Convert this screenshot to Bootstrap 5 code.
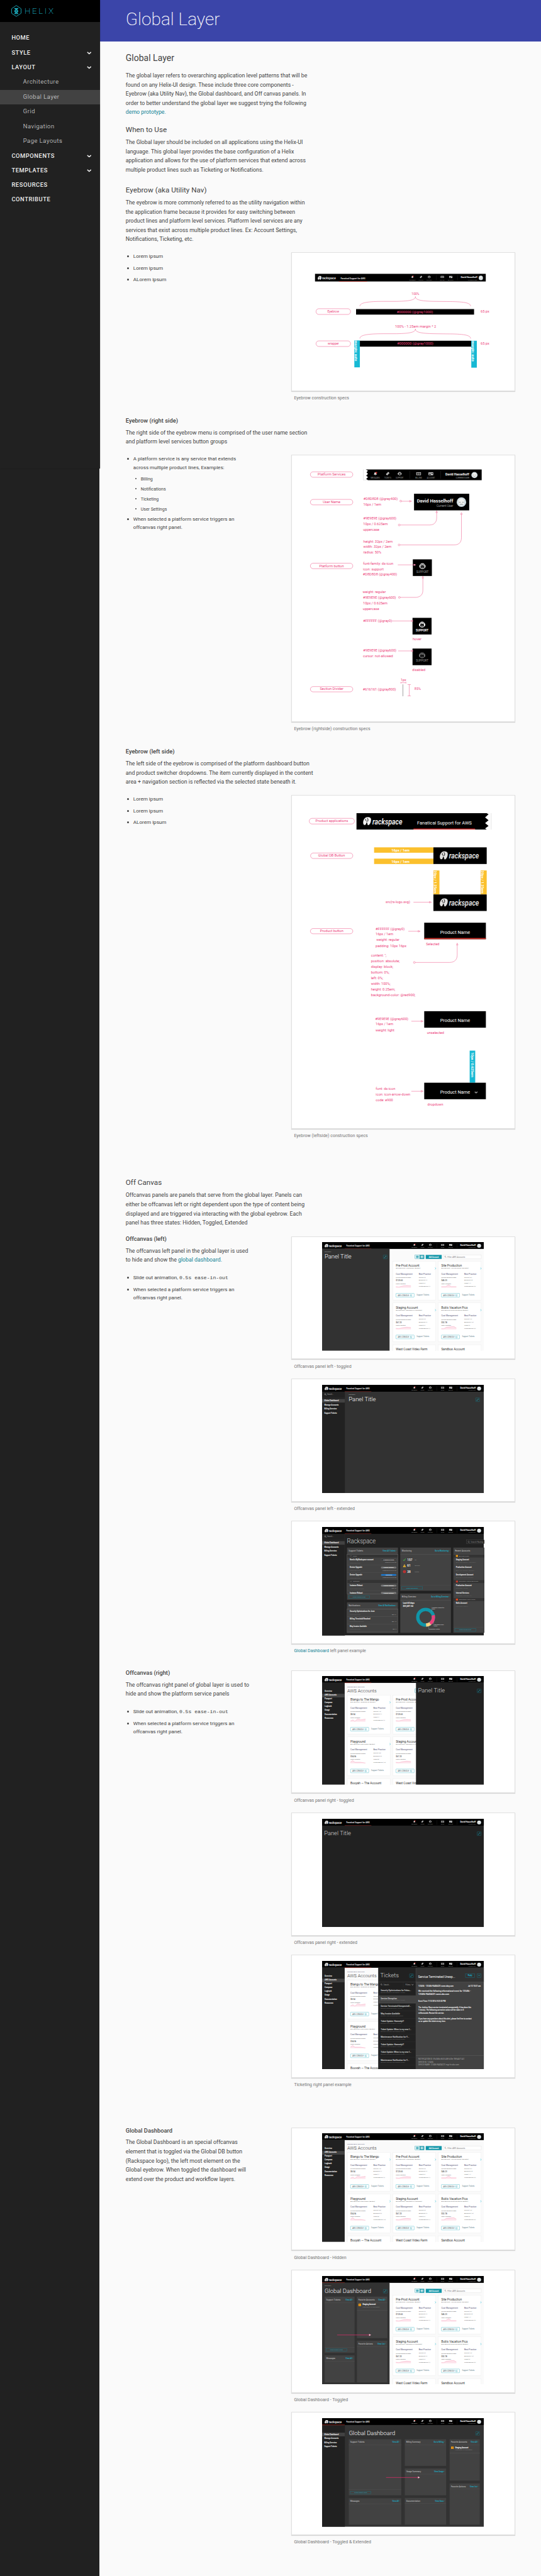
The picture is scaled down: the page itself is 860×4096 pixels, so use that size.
<!DOCTYPE html>
<html lang="en">
<head>
<meta charset="utf-8">
<meta name="viewport" content="width=device-width, initial-scale=1">
<title>Global Layer - Helix</title>
<link href="https://cdn.jsdelivr.net/npm/bootstrap@5.3.0/dist/css/bootstrap.min.css" rel="stylesheet">
<style>
:root{--u:.58424px;font-size:calc(16*var(--u))}
body{font-family:Roboto,"Liberation Sans",sans-serif;font-size:calc(15.05*var(--u));line-height:calc(25*var(--u));color:#424242;background:#fafafa;min-height:100vh}
a{color:#118295;text-decoration:none}
.shell{min-height:4096px;background:#fafafa}
.side{width:calc(270.5*var(--u));background:#212121;flex:none}
.side-top{width:calc(272*var(--u));height:calc(1276*var(--u));background:#212121;box-shadow:0 0 2px rgba(0,0,0,.3)}
.brand{height:calc(60*var(--u));background:#000;padding-left:calc(31.500*var(--u))}
.brand svg{width:calc(118*var(--u));height:calc(32*var(--u))}
.menu{padding-top:calc(24.5*var(--u))}
.menu .nav-link{height:calc(40*var(--u));line-height:calc(39*var(--u));padding:0 calc(23*var(--u)) 0 calc(31.500*var(--u));font-size:calc(16*var(--u));font-weight:500;letter-spacing:calc(1*var(--u));color:#eee}
.menu .nav-link.sub{padding-left:calc(63*var(--u));font-weight:300;letter-spacing:calc(1.05*var(--u));color:#e6e6e6}
.menu .nav-link.active{background:#424242}
.menu svg{width:calc(13*var(--u));height:calc(8*var(--u))}
.hero{height:calc(113*var(--u));background:#3b45a9;padding-left:calc(71.500*var(--u))}
.hero h1{font-size:calc(48*var(--u));line-height:calc(60*var(--u));padding-top:calc(22.5*var(--u));font-weight:200;color:#fff;margin:0}
.doc{padding:0 calc(70.4*var(--u)) calc(76*var(--u)) calc(71.5*var(--u))}
.doc h2{font-size:calc(24*var(--u));line-height:calc(32*var(--u));margin:calc(28.8*var(--u)) 0 calc(19.7*var(--u));font-weight:400}
.doc h3{font-size:calc(20*var(--u));line-height:calc(28*var(--u));margin:calc(28*var(--u)) 0 calc(8*var(--u));font-weight:400}
.doc h4{font-size:calc(16*var(--u));line-height:calc(24*var(--u));margin:calc(40.1*var(--u)) 0 calc(8*var(--u));font-weight:500}
.doc h3.near{margin-top:calc(20.5*var(--u))}
.doc h3.far{margin-top:calc(103.5*var(--u))}
.doc p{max-width:calc(530*var(--u));margin:0}
.doc .half h4{margin-top:0}
.doc .half p{max-width:calc(360*var(--u))}
.doc ul{list-style:none;padding-left:calc(20.5*var(--u));margin:0;font-size:calc(13.9*var(--u));line-height:calc(23*var(--u))}
.doc .half ul{margin-top:calc(24.6*var(--u))}
.doc li{margin-bottom:calc(8.7*var(--u));position:relative}
.doc li::before{content:"";position:absolute;left:calc(-17.5*var(--u));top:calc(8.5*var(--u));width:calc(5.2*var(--u));height:calc(5.2*var(--u));border-radius:50%;background:#424242}
.doc li ul{font-size:calc(12*var(--u));line-height:calc(20*var(--u));padding-top:calc(9.6*var(--u));margin-bottom:calc(-2.3*var(--u))}
.doc li li{margin-bottom:calc(7.3*var(--u))}
.doc li li::before{left:calc(-15.5*var(--u));top:calc(7.3*var(--u));width:calc(4*var(--u));height:calc(4*var(--u))}
code{font-family:"Liberation Mono",monospace;font-size:calc(13.9*var(--u));color:#424242}
.pics{width:calc(609*var(--u));flex:none}
.pics .figure{margin:0 0 calc(23.2*var(--u));display:block}
.pics .figure:last-child{margin-bottom:0}
.pics .card{border:1px solid #e0e0e0;border-radius:0;box-shadow:0 1px 1px rgba(0,0,0,.14);background:#fff;overflow:hidden}
.spec svg{width:calc(609*var(--u));flex:none;display:block;margin:-1px}
.shot .card{height:calc(335*var(--u));align-items:center;padding-top:calc(15*var(--u))}
.shot svg{width:calc(440*var(--u));height:calc(295.5*var(--u));flex:none}
.figure-caption{font-size:calc(12*var(--u));line-height:calc(20*var(--u));padding:calc(9*var(--u)) 0 0 calc(7.500*var(--u));color:#757575}
.gap-a{margin-top:calc(23*var(--u))}
.gap-b{margin-top:calc(19.5*var(--u))}
.gap-c{margin-top:calc(38.1*var(--u))}
.gap-d{margin-top:calc(102.6*var(--u))}
.half .pics{padding-top:calc(4.5*var(--u))}
.gap-d .pics{padding-top:calc(3.5*var(--u))}
svg text{font-family:Roboto,"Liberation Sans",sans-serif;white-space:pre}
</style>
</head>
<body>
<div class="shell d-flex">
  <aside class="side">
    <div class="side-top position-relative">
      <div class="brand d-flex align-items-center">
        <svg viewBox="0 0 118 32"><g fill="none" stroke="#1fbdd0" stroke-width="1.4"><path d="M13.5 1.2 26.5 10v12.500L13.5 31 .8 22.500V10z"/><path stroke-width="2" d="M9 8c0 5 9 4.500 9 8.500s-9 3.500-9 8M18 8c0 5-9 4.500-9 8.500s9 3.500 9 8M10 9.500h7M10 23.500h7M10.500 16.500h6"/></g><text x="36" y="24" font-size="23" font-weight="200" fill="#1fbdd0" letter-spacing="5" textLength="84">HELIX</text></svg>
      </div>
      <nav class="menu nav flex-column">
        <a class="nav-link" href="#">HOME</a>
        <a class="nav-link d-flex justify-content-between align-items-center" href="#">STYLE <svg viewBox="0 0 13 8"><path d="M1.500 1.500l5 4.500 5-4.500" fill="none" stroke="#eee" stroke-width="2.600"/></svg></a>
        <a class="nav-link d-flex justify-content-between align-items-center" href="#">LAYOUT <svg viewBox="0 0 13 8"><path d="M1.500 1.500l5 4.500 5-4.500" fill="none" stroke="#eee" stroke-width="2.600"/></svg></a>
        <a class="nav-link sub" href="#">Architecture</a>
        <a class="nav-link sub active" href="#">Global Layer</a>
        <a class="nav-link sub" href="#">Grid</a>
        <a class="nav-link sub" href="#">Navigation</a>
        <a class="nav-link sub" href="#">Page Layouts</a>
        <a class="nav-link d-flex justify-content-between align-items-center" href="#">COMPONENTS <svg viewBox="0 0 13 8"><path d="M1.500 1.500l5 4.500 5-4.500" fill="none" stroke="#eee" stroke-width="2.600"/></svg></a>
        <a class="nav-link d-flex justify-content-between align-items-center" href="#">TEMPLATES <svg viewBox="0 0 13 8"><path d="M1.500 1.500l5 4.500 5-4.500" fill="none" stroke="#eee" stroke-width="2.600"/></svg></a>
        <a class="nav-link" href="#">RESOURCES</a>
        <a class="nav-link" href="#">CONTRIBUTE</a>
      </nav>
    </div>
  </aside>
  <main class="flex-grow-1">
    <header class="hero"><h1>Global Layer</h1></header>
    <div class="doc">
      <h2>Global Layer</h2>
      <p>The global layer refers to overarching application level patterns that will be<br>found on any Helix-UI design. These include three core components -<br>Eyebrow (aka Utility Nav), the Global dashboard, and Off canvas panels. In<br>order to better understand the global layer we suggest trying the following<br><a href="#">demo prototype.</a></p>
      <h3 class="near">When to Use</h3>
      <p>The Global layer should be included on all applications using the Helix-UI<br>language. This global layer provides the base configuration of a Helix<br>application and allows for the use of platform services that extend across<br>multiple product lines such as Ticketing or Notifications.</p>
      <h3>Eyebrow (aka Utility Nav)</h3>
      <p>The eyebrow is more commonly referred to as the utility navigation within<br>the application frame because it provides for easy switching between<br>product lines and platform level services. Platform level services are any<br>services that exist across multiple product lines. Ex: Account Settings,<br>Notifications, Ticketing, etc.</p>
      <div class="d-flex justify-content-between gap-a">
        <ul><li>Lorem ipsum</li><li>Lorem ipsum</li><li>ALorem ipsum</li></ul>
        <div class="pics spec"><figure class="figure"><div class="card"><svg id="spec1" viewBox="0 0 609 377"></svg></div><figcaption class="figure-caption">Eyebrow construction specs</figcaption></figure></div>
      </div>
      <h4>Eyebrow (right side)</h4>
      <p>The right side of the eyebrow menu is comprised of the user name section<br>and platform level services button groups</p>
      <div class="d-flex justify-content-between gap-a">
        <ul><li>A platform service is any service that extends<br>across multiple product lines, Examples:
          <ul><li>Billing</li><li>Notifications</li><li>Ticketing</li><li>User Settings</li></ul></li>
          <li>When selected a platform service triggers an<br>offcanvas right panel.</li></ul>
        <div class="pics spec"><figure class="figure"><div class="card"><svg id="spec2" viewBox="0 0 609 727"></svg></div><figcaption class="figure-caption">Eyebrow (rightside) construction specs</figcaption></figure></div>
      </div>
      <h4>Eyebrow (left side)</h4>
      <p>The left side of the eyebrow is comprised of the platform dashboard button<br>and product switcher dropdowns. The item currently displayed in the content<br>area + navigation section is reflected via the selected state beneath it.</p>
      <div class="d-flex justify-content-between gap-a">
        <ul><li>Lorem ipsum</li><li>Lorem ipsum</li><li>ALorem ipsum</li></ul>
        <div class="pics spec"><figure class="figure"><div class="card"><svg id="spec3" viewBox="0 0 609 908"></svg></div><figcaption class="figure-caption">Eyebrow (leftside) construction specs</figcaption></figure></div>
      </div>
      <h3 class="far">Off Canvas</h3>
      <p>Offcanvas panels are panels that serve from the global layer. Panels can<br>either be offcanvas left or right dependent upon the type of content being<br>displayed and are triggered via interacting with the global eyebrow. Each<br>panel has three states: Hidden, Toggled, Extended</p>
      <div class="d-flex justify-content-between half gap-b">
        <div><h4>Offcanvas (left)</h4><p>The offcanvas left panel in the global layer is used<br>to hide and show the <a href="#">global dashboard.</a></p>
          <ul><li>Slide out animation, <code>0.5s ease-in-out</code></li><li>When selected a platform service triggers an<br>offcanvas right panel.</li></ul></div>
        <div class="pics shot">
          <figure class="figure"><div class="card"><svg id="shot1" viewBox="0 0 440 295.5"></svg></div><figcaption class="figure-caption">Offcanvas panel left - toggled</figcaption></figure>
          <figure class="figure"><div class="card"><svg id="shot2" viewBox="0 0 440 295.5"></svg></div><figcaption class="figure-caption">Offcanvas panel left - extended</figcaption></figure>
          <figure class="figure"><div class="card"><svg id="shot3" viewBox="0 0 440 295.5"></svg></div><figcaption class="figure-caption"><a href="#">Global Dashboard</a> left panel example</figcaption></figure>
        </div>
      </div>
      <div class="d-flex justify-content-between half gap-c">
        <div><h4>Offcanvas (right)</h4><p>The offcanvas right panel of global layer is used to<br>hide and show the platform service panels</p>
          <ul><li>Slide out animation, <code>0.5s ease-in-out</code></li><li>When selected a platform service triggers an<br>offcanvas right panel.</li></ul></div>
        <div class="pics shot">
          <figure class="figure"><div class="card"><svg id="shot4" viewBox="0 0 440 295.5"></svg></div><figcaption class="figure-caption">Offcanvas panel right - toggled</figcaption></figure>
          <figure class="figure"><div class="card"><svg id="shot5" viewBox="0 0 440 295.5"></svg></div><figcaption class="figure-caption">Offcanvas panel right - extended</figcaption></figure>
          <figure class="figure"><div class="card"><svg id="shot6" viewBox="0 0 440 295.5"></svg></div><figcaption class="figure-caption">Ticketing right panel example</figcaption></figure>
        </div>
      </div>
      <div class="d-flex justify-content-between half gap-d">
        <div><h4>Global Dashboard</h4><p>The Global Dashboard is an special offcanvas<br>element that is toggled via the Global DB button<br>(Rackspace logo), the left most element on the<br>Global eyebrow. When toggled the dashboard will<br>extend over the product and workflow layers.</p></div>
        <div class="pics shot">
          <figure class="figure"><div class="card"><svg id="shot7" viewBox="0 0 440 295.5"></svg></div><figcaption class="figure-caption">Global Dashboard - Hidden</figcaption></figure>
          <figure class="figure"><div class="card"><svg id="shot8" viewBox="0 0 440 295.5"></svg></div><figcaption class="figure-caption">Global Dashboard - Toggled</figcaption></figure>
          <figure class="figure"><div class="card"><svg id="shot9" viewBox="0 0 440 295.5"></svg></div><figcaption class="figure-caption">Global Dashboard - Toggled &amp; Extended</figcaption></figure>
        </div>
      </div>
    </div>
  </main>
</div>
<script src="https://cdn.jsdelivr.net/npm/bootstrap@5.3.0/dist/js/bootstrap.bundle.min.js"></script>
<script>
const PINK = '#ec407a', CYAN = '#16b9d4', TEAL = '#1095a8', GOLD = '#fbc02d';

// A drawing surface with its own grid: (x / ux + ox, y / uy + oy) gives SVG units.
class Draft {
  constructor(ux = 1, uy = 1, ox = 0, oy = 0) { Object.assign(this, {ux, uy, ox, oy, out: ''}); }
  x(v) { return +(v / this.ux + this.ox).toFixed(2); }
  y(v) { return +(v / this.uy + this.oy).toFixed(2); }
  raw(s) { this.out += s; return this; }
  rect(x1, y1, x2, y2, fill, more = '') {
    return this.raw(`<rect x="${this.x(x1)}" y="${this.y(y1)}" width="${((x2 - x1) / this.ux).toFixed(2)}" height="${((y2 - y1) / this.uy).toFixed(2)}" fill="${fill}" ${more}/>`);
  }
  path(d, more = `fill="none" stroke="${PINK}" stroke-width=".8"`) {
    return this.raw(`<path d="${d.replace(/(-?[\d.]+),(-?[\d.]+)/g, (m, a, b) => this.x(a) + ' ' + this.y(b))}" ${more}/>`);
  }
  text(x, y, s, size, fill = PINK, x2 = 0, more = '') {
    if (!s) return this;
    const fit = x2 ? `textLength="${((x2 - x) / this.ux).toFixed(2)}" lengthAdjust="spacingAndGlyphs"` : '';
    return this.raw(`<text x="${this.x(x)}" y="${this.y(y)}" font-size="${size}" fill="${fill}" ${fit} ${more}>${s}</text>`);
  }
  mid(x, y, s, size, fill = PINK, more = '') { return this.text(x, y, s, size, fill, 0, 'text-anchor="middle" ' + more); }
  down(x, y, s, size, len, fill = '#fff') {
    return this.raw(`<text transform="translate(${this.x(x)} ${this.y(y)}) rotate(90)" font-size="${size}" font-weight="700" fill="${fill}" textLength="${len}" lengthAdjust="spacingAndGlyphs">${s}</text>`);
  }
  pill(x1, y1, x2, y2, s, base, ends) {
    this.rect(x1, y1, x2, y2, 'none', `rx="7.500" stroke="${PINK}" stroke-width=".8"`);
    return ends ? this.text(ends[0], base, s, 8.5, PINK, ends[1]) : this.mid((x1 + x2) / 2, base, s, 8.5);
  }
  dot(x, y) { return this.raw(`<circle cx="${this.x(x)}" cy="${this.y(y)}" r="2.400" fill="#fff" stroke="${PINK}" stroke-width=".8"/>`); }
  arrow(x1, x2, y) {
    this.path(`M${x1},${y} L${x2},${y}`);
    const a = this.x(x2), b = this.y(y);
    return this.raw(`<path d="M${a - 5} ${b - 2.2}L${a} ${b}L${a - 5} ${b + 2.2}z" fill="#fff" stroke="${PINK}" stroke-width=".8"/>`);
  }
  up(x, y) {
    const a = this.x(x), b = this.y(y);
    return this.raw(`<path d="M${a - 2.2} ${b + 5}L${a} ${b}L${a + 2.2} ${b + 5}z" fill="#fff" stroke="${PINK}" stroke-width=".8"/>`);
  }
  put(id) { document.getElementById(id).innerHTML += this.out; }
}

// Icons are drawn on a 16 x 16 grid around their centre.
const ICONS = {
  bell: c => `<path fill="${c}" d="M0-7c-4 0-5 3-5 6s-1 4-3 6H8C6 3 5 2 5-1S4-7 0-7zM-2.500 6h5L0 8z"/><circle cx="5" cy="-4.500" r="4" fill="#e53935"/>`,
  ticket: c => `<g transform="rotate(-45)"><rect x="-8" y="-4.500" width="16" height="9" rx="1" fill="${c}"/><rect x="-4" y="-2" width="8" height="4" fill="none" stroke="#000" stroke-width="1.200"/></g>`,
  support: c => `<circle r="6.500" fill="none" stroke="${c}" stroke-width="2"/><path fill="${c}" d="M-5-1C-4-6 4-6 5-1 2-1 0-2-1-3-2-1-3-1-5-1zM-8-2.500h3v6h-3zM5-2.500h3v6H5z"/><circle cx="-2" cy="1.500" r=".9" fill="${c}"/><circle cx="2" cy="1.500" r=".9" fill="${c}"/><path d="M-2 4.500h4" stroke="${c}"/>`,
  billing: c => `<path fill="${c}" fill-rule="evenodd" d="M-9-5.500H9v11H-9zM-7-3.500v7H7v-7z"/><ellipse rx="2.600" ry="3" fill="none" stroke="${c}" stroke-width="1.600"/><path stroke="${c}" stroke-width="1.500" d="M-6.500-3v1.500M6.500-3v1.500M-6.500 3V1.500M6.500 3V1.500"/>`,
  account: c => `<path fill="${c}" d="M-9-5.500H9v11H-9z"/><circle cx="-3.500" cy="-1.500" r="2" fill="#000"/><path fill="#000" d="M-7 4c0-4 7-4 7 0zM2-3h5v1.500H2zM2 0h5v1.500H2z"/>`
};
const icon = (name, x, y, k, c = '#e0e0e0') => `<g transform="translate(${x} ${y}) scale(${k})">${ICONS[name](c)}</g>`;

const avatar = (x, y, r) => `<circle cx="${x}" cy="${y}" r="${r}" fill="#cfdbe1"/><ellipse cx="${x}" cy="${y}" rx="${r * .62}" ry="${r * .72}" fill="#f1f1ee"/><path d="M${x - r * .5} ${y}h${r * .35}M${x + r * .15} ${y}h${r * .35}M${x - r * .3} ${y + r * .45}h${r * .6}" stroke="#8f989d" stroke-width="${r * .14}"/>`;

// Rackspace mark and wordmark; 46 x 10 at scale 1.
const logo = (x, y, k, c = '#f2f2f2') => `<g transform="translate(${x} ${y}) scale(${k})"><path fill="${c}" d="M4.500.3C7 0 9.600.5 9.500 3.600 9.400 6.200 8.200 9.200 6.200 9.800 5.200 10 5.400 7.800 4.400 6 3.600 7.500 3.600 9.300 2.200 9.600.6 9.800-.2 7.600.2 5.400.7 2.900 2.600.6 4.500.3z"/><path d="M4.800 1.200c1.200 1 1.400 2.600.6 4.200M3.400 2.400c-.9 1.400-.3 2.500 1.300 2.800" fill="none" stroke="#000" stroke-width=".7"/><text x="11" y="8.700" font-size="9" font-weight="600" font-style="italic" fill="${c}" textLength="35.500" lengthAdjust="spacingAndGlyphs">rackspace</text></g>`;

const tools = caps => {
  const d = new Draft(), L = '#9e9e9e';
  const up = s => caps ? s.toUpperCase() : s;
  d.raw(icon('bell', 251, 7.5, .36)).mid(251, 15.8, 'MESSAGES', 3.2, L);
  d.raw(icon('ticket', 273, 7.5, .36)).mid(273, 15.8, up('Tickets'), 3.2, L);
  d.raw(icon('support', 294.3, 7.5, .4)).mid(294.3, 15.8, 'SUPPORT', 3.2, L);
  d.rect(312, 3, 312.4, 16.5, '#424242');
  d.raw(icon('billing', 328, 7.7, .46)).mid(328, 15.8, up('Billing'), 3.2, L);
  d.raw(icon('account', 349.8, 7.7, .46)).mid(349.8, 15.8, up('Account'), 3.2, L);
  d.rect(367, 3, 367.4, 16.5, '#424242');
  d.text(375.7, 10.6, 'David Hasselhoff', 5.8, '#fff', 418, 'font-weight="700"');
  d.text(caps ? 394 : 398.5, 15.9, caps ? 'CURRENTUSER' : 'Current User', 3.2, L, 418);
  return d.out + avatar(427.3, 10, 5.5);
};
const topbar = (red, caps) => new Draft()
  .rect(0, 0, 440, 18.6, '#000').raw(logo(7, 4.8, 1))
  .text(66, 12.8, 'Fanatical Support for AWS', 6.2, '#fff', 129.5, 'font-weight="500"')
  .raw(red ? `<rect x="${red[0]}" y="17.900" width="${red[1]}" height="1.100" fill="${red[2]}"/>` : '')
  .raw(tools(caps)).out;
const AWS = ['61.500', '72.500', '#c1352b'], DIM = ['61.500', '72.500', '#8a2c27'], HOME = ['0', '61.500', '#c1352b'];

/* ---------- Eyebrow construction ---------- */
{
  const d = new Draft(1.0652, 2.3059, -792.5, -27);
  d.raw(`<g transform="translate(${d.x(913)} ${d.y(198)}) scale(1.056 1.120)">${topbar(AWS, true)}</g>`);
  const brace = y => d.path(`M1043,${y + 60} C1043,${y + 38} 1066,${y + 30} 1112,${y + 30} L1150,${y + 30} C1190,${y + 28} 1204,${y + 20} 1204,${y} C1204,${y + 20} 1218,${y + 28} 1258,${y + 30} L1296,${y + 31} C1342,${y + 31} 1364,${y + 38} 1364,${y + 60}`);
  d.mid(1204, 331, '100%', 8.5); brace(341);
  d.pill(916, 417, 1016, 453, 'Eyebrow', 442);
  d.rect(1032, 417, 1374, 421, '#bdbdbd').rect(1032, 420, 1374, 454, '#000');
  d.text(1150, 445, '#000000 (@gray1000)', 8.5, PINK, 1255).text(1393, 442, '65 px', 8.5, PINK, 1418);
  d.text(1145, 535, '100% - 1.25em margin * 2', 8.5, PINK, 1264); brace(544);
  d.pill(916, 619, 1016, 654, 'wrapper', 643);
  d.rect(1043, 618, 1366, 655, '#000').text(1151, 643, '#000000 (@gray1000)', 8.5, PINK, 1256).text(1393, 643, '65 px', 8.5, PINK, 1418);
  d.rect(1027, 616, 1043, 785, CYAN).rect(1366, 618, 1382, 787, CYAN);
  d.down(1028.5, 617, 'margin: auto', 9, 56).down(1368, 619, 'margin: auto', 9, 56);
  d.put('spec1');
}

/* ---------- Eyebrow, right side ---------- */
{
  const d = new Draft(2.45, 2.0103, -12.5, -38);
  const T = (x, y, s, x2) => d.text(x, y, s, 9, PINK, x2);
  d.pill(158, 170, 441, 200, 'Platform Services', 191, [207, 393]);
  d.path('M511,157 L511,215 L1300,215', 'fill="none" stroke="#bdbdbd" stroke-width=".6"');
  d.path('M527,157 L542,164 L532,173 L542,181 L530,191 L542,199 L530,209 L542,216 L1300,216 L1300,157z', 'fill="#000"');
  d.raw(`<g transform="translate(-155.300 ${d.y(157)}) scale(1.530)">${tools(true)}</g>`);

  d.pill(158, 321, 441, 351, 'User Name', 342, [241, 358]);
  T(512, 324, '#D8D8D8 (@gray400)', 740); T(511, 354, '16px / 1em', 630);
  d.arrow(760, 832, 331).dot(760, 330);
  d.rect(849, 290, 1217, 381, '#000').text(868, 339, 'David Hasselhoff', 13, '#f2f2f2', 1110, 'font-weight="700"').text(999, 362, 'Current User', 8, '#9e9e9e', 1110);
  d.raw(avatar(d.x(1165), d.y(336), 13));
  T(511, 430, '#9E9E9E (@gray600)', 731); T(510, 462, '10px / 0.625em', 674); T(510, 494, 'uppercase', 618);
  d.path('M750,461 L952,461 C985,461 1000,445 1000,420 L1000,392').dot(750, 461).up(1000, 383);
  T(511, 557, 'height: 32px / 2em', 706); T(511, 587, 'width: 32px / 2em', 698); T(511, 618, 'radius: 50%', 631);
  d.path('M749,570 L1115,570 C1150,570 1165,555 1165,530 L1165,402').dot(749, 570).up(1165, 393);

  d.pill(158, 670, 441, 700, 'Platform button', 691, [217, 381]);
  T(510, 677, 'font-family: ds-icon', 710); T(509, 708, 'icon: support', 646); T(508, 738, '#D8D8D8 (@gray400)', 736);
  const chip = (x, y, c, l, w) => d.rect(x, y, x + 127, y + 91, '#000').raw(icon('support', d.x(x + 64), d.y(y + 37), 1.05, c)).mid(x + 64, y + 73, 'SUPPORT', 7.7, l, `font-weight="${w}"`);
  chip(841, 649, '#e0e0e0', '#9e9e9e', 400);
  d.arrow(741, 860, 679);
  T(507, 834, 'weight: regular', 661); T(509, 866, '#9E9E9E (@gray600)', 729); T(509, 897, '10px / 0.625em', 672); T(508, 927, 'uppercase', 616);
  d.path('M751,857 L862,857 C894,855 908,840 908,818 L908,750').dot(751, 857).up(908, 741);
  T(510, 991, '#FFFFFF (@gray0)', 702); chip(839, 969, '#fff', '#fff', 700); d.arrow(702, 844, 986); T(840, 1092, 'hover', 898);
  T(510, 1154, '#9E9E9E (@gray600)', 731); T(509, 1184, 'cursor: not-allowed', 709); chip(839, 1137, '#757575', '#9e9e9e', 400); d.arrow(743, 844, 1150); T(837, 1260, 'disabled', 924);

  d.pill(158, 1345, 441, 1374, 'Section Divider', 1365, [221, 378]);
  T(508, 1367, '#616161 (@gray800)', 729); T(760, 1315, '1px', 797); T(852, 1363, '85%', 894);
  d.path('M761,1320 L761,1328 M761,1324 L795,1324 M795,1320 L795,1328 M806,1334 L828,1334 M817,1334 L817,1396 M806,1396 L828,1396');
  d.path('M775,1333 L775,1398', 'stroke="#616161"');
  d.put('spec2');
}

/* ---------- Eyebrow, left side ---------- */
{
  const d = new Draft(1.4, 2.8, -492.5, -184.5);
  d.pill(758, 695, 930, 738, 'Product applications', 725, [782, 906]);
  d.path('M938,655 L1434,655 L1441,664 L1428,688 L1441,710 L1428,731 L1441,753 L1428,772 L1434,780 L938,780z', 'fill="#000"');
  d.path('M1451,655 L1451,780', 'stroke="#bdbdbd" stroke-width=".7"');
  d.raw(logo(d.x(963), d.y(684), 2.3)).text(1169, 741, 'Fanatical Support for AWS', 12.5, '#fff', 1377);
  d.rect(1155, 773, 1390, 780, '#d32f2f');
  d.pill(763, 959, 924, 1001, 'Global DB Button', 988, [792, 894]);
  for (const y of [916, 1002]) d.rect(1005, y, 1231, y + 41, GOLD).text(1071, y + 32, '16px / 1em', 8.5, '#fff', 1140, 'font-weight="700"');
  d.rect(1231, 916, 1434, 1043, '#000').raw(logo(d.x(1255), d.y(945), 2.3, '#e0e0e0'));
  for (const x of [1231, 1411]) d.rect(x, 1092, x + 23, 1275, GOLD).down(x + 2, 1094, '20px / 1.25em', 9.5, 62);
  d.rect(1231, 1275, 1434, 1401, '#000').raw(logo(d.x(1255), d.y(1303), 2.3, '#e0e0e0'));
  d.text(1049, 1341, 'src(rs-logo.svg)', 8.5, PINK, 1142).arrow(1155, 1223, 1334);
  d.put('spec3');

  const e = new Draft(2.45, 2.45, -12.5, 335.5);
  const T = (x, y, s, x2) => e.text(x, y, s, 9.6, PINK, x2);
  const name = y => e.rect(917, y, 1328, y + 110, '#000').text(1023, y + 74, 'Product Name', 13.5, '#fff', 1223);
  e.pill(158, 69, 441, 104, 'Product button', 93, [222, 378]);
  T(593, 78, '#FFFFFF (@gray0)', 786); T(593, 115, '16px / 1em', 710); T(598, 152, 'weight: regular', 752); T(593, 191, 'padding: 10px 16px', 798);
  e.arrow(811, 889, 87); name(30); e.rect(917, 132, 1328, 140, '#c62f26');
  T(929, 179, 'Selected', 1018);
  [["content: '';", 257, 665], ['position: absolute;', 294, 754], ['display: block;', 333, 710], ['bottom: 0%;', 370, 685], ['left: 0%;', 407, 643], ['width: 100%;', 443, 692], ['height: 0.25em;', 482, 723], ['background-color: @red900;', 519, 858]].forEach(r => T(562, r[1], r[0], r[2]));
  e.path('M851,295 L1085,295 C1120,295 1137,275 1137,245 L1137,177').dot(851, 295).up(1137, 166);
  T(590, 678, '#9E9E9E (@gray600)', 811); T(593, 715, '16px / 1em', 710); T(593, 754, 'weight: light', 718);
  e.arrow(831, 909, 687); name(620); T(935, 771, 'unselected', 1049);
  e.rect(1220, 883, 1257, 1097, CYAN).down(1230, 894, '10px / 0.625em', 9.5, 68);
  name(1097); e.path('M1254,1157 L1263,1165 L1272,1157', 'fill="none" stroke="#9e9e9e" stroke-width="2.200"');
  T(594, 1146, 'font: ds-icon', 724); T(594, 1183, 'icon: icon-arrow-down', 824); T(594, 1220, 'code: e900', 709);
  e.arrow(831, 909, 1154); T(939, 1249, 'dropdown', 1044);
  e.put('spec3');
}

/* ---------- Product screens ---------- */
const ACCOUNTS = [
  [['Blango to The Mango', '45656256452 (Aviator)', '$8.34', [12, 1, 1, 4], 78, 'M0 6L7 3L12 7L20 0L28 3L41 1'], ['Pre-Prod Account', '3453656657 (Aviator)', '$123.65', [3, 4, 34, 1], 64, 'M0 5L8 6L20 3L30 2L41 3'], ['Site Production', '1233456236656 (Navigator)', '$45.23', [34, 5, 11, 2], 56, 'M0 5L12 5L20 0L27 5L41 5']],
  [['Playground', '6354678654 (Aviator)', '$34.56', [23, 3, 8, 12], 41, 'M0 5L6 0L12 5L28 5L41 7'], ['Staging Account', '76854865743 (Navigator)', '$67.23', [3, 4, 34, 1], 60, 'M0 5L8 6L20 3L30 2L41 3'], ["Bob's Vacation Pics", '87654353456678 (Aviator)', '$32.78', [12, 13, 6, 9], 72, 'M0 6L7 6L14 2L34 0L41 4']],
  [['Booyah — The Account', '', '', [], 84], ['West Coast Video Farm', '', '', [], 86], ['Sandbox Account', '', '', [], 64]]
];
const account = (c, r, a) => {
  const X = 68.6 + c * 123.6, Y = 52.2 + r * 113.5, d = new Draft(1, 1, X, Y);
  d.rect(0, 0, 117, 105.5, '#fff', 'stroke="#ececec" stroke-width=".8"');
  d.text(8.5, 15, a[0], 8.8, '#303030', 8.5 + a[4]);
  if (!a[1]) return d.out;
  d.text(8.5, 20.3, 'AWS Account: ' + a[1], 3.7, '#616161', 8.5 + 36 + a[1].length * 1.55);
  d.path('M115,17 L117.5,19.5 L115,22', `fill="none" stroke="${CYAN}" stroke-width=".9"`);
  d.text(8.5, 36.3, 'Cost Management', 5.4, '#557', 54).text(71, 36.3, 'Best Practice', 5.4, '#557', 104);
  d.text(8.5, 46, 'Current Month-to-Date', 3.4, '#555', 49.5).text(8.5, 54.3, a[2], 5.2, '#212121').text(8.5, 62.3, 'Last 6 months', 3.6, '#555', 35);
  ['Security', 'Availability', 'Usage', 'Trusted Advisor'].forEach((s, i) => d.text(71, [45, 53, 61.2, 70][i], `${s} (${a[3][i]})`, 3.7, '#616161'));
  d.raw(`<g transform="translate(${X + 8.5} ${Y + 64})"><path d="${a[5]}V8H0z" fill="#fde4ec"/><path d="${a[5]}" fill="none" stroke="#f48fb1" stroke-width=".7"/></g>`);
  d.rect(8.8, 87.3, 58.3, 97.5, '#fff', `stroke="#4fb9c9" stroke-width=".8" rx="1"`).text(13.5, 94.2, 'AWS CONSOLE', 4.4, '#35525a', 44.5);
  d.path('M50,90.5 L48,90.500 L48,94.500 L52,94.500 L52,92.500 M50,92.500 L53,89.500', `fill="none" stroke="${TEAL}" stroke-width=".7"`);
  return d.text(65, 93, 'Support Tickets', 4.6, '#607d8b', 99).out;
};
const accounts = from => {
  const d = new Draft();
  d.rect(0, 18.6, 440, 295.5, '#fafafa');
  if (!from) d.text(68.6, 30.5, 'Managed AWS: Accounts', 4, '#557', 115.5).text(68.6, 45, 'AWS Accounts', 12.6, '#303030', 148.2, 'font-weight="300"');
  d.rect(253, 35.2, 265.5, 45.4, '#fff', `stroke="${TEAL}" stroke-width=".7"`).rect(265.5, 34.9, 278, 45.8, TEAL);
  for (let i = 0; i < 9; i++) { const x = i % 3 * 2.6, y = (i / 3 | 0) * 2.3; d.rect(255.5 + x, 37 + y, 257.7 + x, 38.8 + y, TEAL).rect(268 + x, 37 + y, 270.2 + x, 38.8 + y, '#fff'); }
  return d.out + ACCOUNTS.map((row, r) => row.map((a, c) => c >= from ? account(c, r, a) : '').join('')).join('');
};
const filters = () => new Draft()
  .rect(282, 34.9, 325.5, 45.8, TEAL).mid(303.8, 42.3, 'Add Account', 4.8, '#fff', 'font-weight="700"')
  .rect(329.5, 35, 433, 45.6, '#fff', 'stroke="#ddd" stroke-width=".7"').raw('<circle cx="335" cy="39.500" r="1.800" fill="none" stroke="#757575" stroke-width=".7"/><path d="M336.300 40.800l1.800 2" stroke="#757575" stroke-width=".8"/>').text(341, 42.2, 'Filter AWS Accounts', 5, '#757575', 389, 'font-style="italic"').out;
const NAV = ['Overview', 'AWS Accounts', 'Passport', 'Compass', 'Logbook', 'Usage', 'Documentation', 'Resources'];
const productNav = () => {
  const d = new Draft();
  d.rect(0, 18.6, 61.5, 295.5, '#212121').rect(0, 48.3, 61.5, 58.2, '#424242');
  NAV.forEach((s, i) => d.text(7, 43.2 + i * 10.35, s, 4.9, '#eee', 0, 'font-weight="700"'));
  return d.out;
};
const globalNav = (y0, step, search) => {
  const d = new Draft();
  d.rect(0, 18.6, 62, 295.5, '#212121').rect(0, y0 - 6.5, 62, y0 + 3.3, '#424242');
  if (search) d.raw('<circle cx="8.500" cy="25.500" r="1.800" fill="none" stroke="#bbb" stroke-width=".8"/><path d="M10 27l2 2" stroke="#bbb" stroke-width=".8"/>').text(13.5, 28, 'Search...', 4.8, '#9e9e9e', 31.5).rect(0, 34.5, 62, 35.2, '#333');
  ['Global Dashboard', 'Manage Accounts', 'Billing Overview', 'Support Tickets'].forEach((s, i) => d.text(6, y0 + i * step, s, 4.9, '#eee', 6 + [39, 39, 34, 34][i], 'font-weight="700"'));
  return d.out;
};
const expand = (x, y) => `<rect x="${x}" y="${y}" width="10.500" height="10" rx=".8" fill="none" stroke="#167787" stroke-width=".8"/><path d="M${x + 3.2} ${y + 7}l4-4M${x + 3} ${y + 5.2}v2h2M${x + 7.4} ${y + 4.8}v-2h-2" fill="none" stroke="${CYAN}" stroke-width=".8"/>`;
const tile = (d, x1, y1, x2, y2, title, link, hh, tx, lx) => d
  .rect(x1, y1, x2, y2, '#424242').rect(x1, y1 + hh, x2, y1 + hh + .7, '#555')
  .text(x1 + 4, y1 + tx, title, 5.4, '#d0d0d0', x1 + 4 + lx)
  .text(x2 - 4, y1 + tx, link + ' ›', 5, CYAN, 0, 'text-anchor="end" font-weight="500"');
const put = (id, s) => document.getElementById(id).innerHTML = s;

put('shot1', accounts(1) + filters() + topbar(DIM) + new Draft().rect(0, 18.6, 183.5, 295.5, '#323232').rect(183.5, 18.6, 184.4, 295.5, '#bbb')
  .text(7, 27, 'Rackspace', 3.6, '#bbb').text(7, 45, 'Panel Title', 17, '#fff', 80, 'font-weight="300"').raw(expand(166.5, 35.5)).out);

put('shot2', new Draft().rect(0, 0, 440, 295.5, '#323232').text(72.5, 27, 'Rackspace', 3.6, '#bbb').text(72.5, 45, 'Panel Title', 17, '#fff', 146, 'font-weight="300"').raw(expand(418, 35.5)).out + globalNav(45, 11, true) + topbar(DIM));

{
  const d = new Draft(2.45, 3, -97.14, -55);
  d.rect(238, 165, 1316, 1050, '#212121').raw(globalNav(45, 11, true)).rect(388, 222, 390, 1050, '#333');
  d.text(404, 299, 'Rackspace', 18, '#d5d5d5', 595, 'font-weight="300"');
  d.rect(1201, 271, 1330, 301, '#212121', 'stroke="#555" stroke-width=".7"').raw(`<circle cx="${d.x(1215)}" cy="${d.y(286)}" r="2" fill="none" stroke="#999" stroke-width=".7"/><path d="M${d.x(1218)} ${d.y(291)}l2 2" stroke="#999" stroke-width=".7"/>`).text(1229, 293, 'Search Racksp', 5.2, '#888', 1315);
  const box = (x1, y1, x2, y2, h, a, ax, l, lx) => d.rect(x1, y1, x2, y2, '#424242').rect(x1, y1 + h, x2, y1 + h + 2, '#606060').text(x1 + 11, y1 + 30, a, 5.6, '#cfcfcf', ax).text(lx, y1 + 33, l && l + ' ›', 5.2, CYAN, x2 - 10, 'font-weight="500"');
  const B = 'font-weight="700"', W = '#eee', G = '#6a6a6a', R = 'text-anchor="end"';
  box(404, 333, 744, 759, 54, 'Support Tickets', 511, 'View All Tickets', 642);
  d.rect(406, 389, 742, 414, '#333').text(443, 405, 'Today', 4.3, '#aaa', 470).rect(406, 598, 742, 622, '#333').text(443, 614, 'Yesterday', 4.3, '#aaa', 488);
  for (const y of [397, 606]) d.path(`M425,${y} L430,${y + 7} L435,${y}`, 'fill="none" stroke="#aaa" stroke-width=".6"');
  d.rect(405, 388, 743, 712, 'none', 'stroke="#707070" stroke-width=".7"');
  [[437, 'Need a MyRackspace account', 'Staging Account', 'Feedback Received', '#333', 'Today at 2:36 PM', 581], [500, 'Device Upgrade', 'Staging Account', 'Pending Customer', '#777', 'Yesterday at 5:23 PM', 505], [560, 'Device Upgrade', 'Staging Account', 'Transferred', '#1073d0', 'Yesterday at 5:23 PM', 505], [647, 'Instance Reboot', 'Development Account', 'Pending Customer', '#777', 'May 29', 508], [707, 'Instance Reboot', '', 'Pending Customer', '#777', '', 508]].forEach(r => {
    d.text(423, r[0], r[1], 4.7, W, r[6], B).text(423, r[0] + 24, r[2], 3.9, G);
    d.rect(631, r[0] - 10, 733, r[0] + 3, r[4], 'rx="2.200" stroke="#888" stroke-width=".4"').mid(682, r[0], r[3], 3.4, '#fff', B).text(733, r[0] + 22, r[5], 4, '#aaa', 0, R);
  });
  [475, 536, 685].forEach(y => d.rect(406, y, 742, y + 1.5, '#5c5c5c'));
  d.rect(416, 725, 555, 747, 'none', `stroke="#167787" stroke-width=".8"`).mid(485, 738, 'Create Support Ticket', 3.6, CYAN);
  box(404, 780, 744, 1029, 54, 'Notifications', 492, 'View All Notifications', 612);
  d.rect(405, 836, 743, 1028, 'none', 'stroke="#707070" stroke-width=".6"');
  [['Security Optimizations for June', 'Staging Account', 'Apr 21', 588], ['Billing Threshold Reached', 'Development Account', 'Apr 12', 559], ['May Invoice Available', 'Staging Account', 'Apr 3', 536]].forEach((r, i) => d.text(423, 860 + i * 60, r[0], 4.7, W, r[3], B).text(423, 882 + i * 60, r[1], 3.9, G).text(733, 882 + i * 60, r[2], 4.2, '#aaa', 0, R).rect(406, 897 + i * 60, 742, 899 + i * 60, '#5c5c5c'));
  box(759, 333, 1097, 686, 54, 'Monitoring', 835, 'Go to Monitoring', 990);
  [['157', 'OK', 440], ['61', 'warning', 488], ['38', 'critical', 538]].forEach(r => d.text(805, r[2], r[0], 8.3, '#fff', 0, 'font-weight="500"').text(855, r[2] - 4, r[1], 4, '#999'));
  d.path('M779,434 L784,440 L795,423', 'fill="none" stroke="#43a047" stroke-width="1.800"').path('M787,468 L797,493 L777,493z', 'fill="#fbc02d"').path('M787,476 L787,485 M787,487 L787,490', 'stroke="#424242" stroke-width="1.200"');
  d.raw(`<circle cx="${d.x(787)}" cy="${d.y(530)}" r="4" fill="#d32f2f"/>`).path('M787,522 L787,538', 'stroke="#424242" stroke-width="1"');
  d.rect(759, 639, 1097, 641, '#555').rect(769, 652, 908, 673, 'none', 'stroke="#167787" stroke-width=".8"').mid(838, 666, 'Create New Monitor', 3.6, CYAN);
  box(759, 708, 1097, 1029, 54, 'Billing Overview', 865, 'Go to Billing Overview', 965);
  d.text(777, 791, 'Last 60 days', 5, '#fff', 854, B).text(777, 815, '$23,457.34', 5, '#fff', 845, B);
  const cx = d.x(928), cy = d.y(902), r = 21.3, C = 2 * Math.PI * r, seg = (a, b, c) => `<circle cx="${cx}" cy="${cy}" r="${r}" fill="none" stroke="${c}" stroke-width="9" stroke-dasharray="${(b - a) * C} ${C}" transform="rotate(${a * 360 - 90} ${cx} ${cy})"/>`;
  d.raw(seg(0, 1, TEAL) + seg(.21, .4, '#ec407a') + seg(.4, .49, '#ffd180'));
  d.path('M969,820 L969,858 M981,932 L981,977 M949,975 L949,1003', 'fill="none" stroke="#aaa" stroke-width=".6"');
  [['Fanatical Support for', 973, 828, 1052], ['AWS', 973, 839, 991], ['OpenStack Public', 985, 966, 1050], ['Cloud', 985, 977, 1006], ['Dedicated Hosting', 952, 1002, 1022]].forEach(q => d.text(q[1], q[2], q[0], 3.6, '#eee', q[3]));
  box(1113, 333, 1330, 1029, 54, 'Recent Accounts', 1225, '', 1300);
  [[390, 'AWS Accounts', '#f39c12', 1218], [599, 'Dedicated Hosting Accounts', '#c0392b', 1279], [746, 'OpenStack Public Cloud', '#e0431b', 1259]].forEach(q => d.rect(1113, q[0], 1330, q[0] + 24, '#333').rect(1130, q[0] + 4, 1144, q[0] + 19, q[2]).text(1150, q[0] + 15, q[1], 4.2, '#aaa', q[3]));
  [[437, 'Staging Account', 'AWS: 09876556321 (Navigator)', 1217], [500, 'Production Account', 'AWS: 12312622324 (Aviator)', 1235], [560, 'Development Account', 'AWS: 8675475275 (Aviator)', 1246], [647, 'Production Account', 'Dedicated: 123456', 1235], [707, 'Internal Services', 'Dedicated: 10101001101', 1218], [794, "Bob's Account", 'Pub Cloud: 789012', 1205]].forEach(q => d.text(1130, q[0], q[1], 4.7, W, q[3], B).text(1130, q[0] + 22, q[2], 3.9, G));
  d.rect(1113, 981, 1316, 983, '#555').rect(1123, 995, 1262, 1017, 'none', 'stroke="#167787" stroke-width=".8"').mid(1192, 1008, 'Create New Account', 3.6, CYAN);
  put('shot3', d.out + topbar(DIM));
}

put('shot4', accounts(0) + productNav() + topbar(AWS) + new Draft().rect(255.5, 18.6, 440, 295.5, '#212121').text(261, 45, 'Panel Title', 17, '#d5d5d5', 334, 'font-weight="300"').raw(expand(422, 35.5)).out);
put('shot5', new Draft().rect(0, 0, 440, 295.5, '#212121').text(5.5, 45, 'Panel Title', 17, '#d5d5d5', 78.5, 'font-weight="300"').raw(expand(422, 35.5)).out + topbar(DIM));

{
  const d = new Draft(2.45, 3, -97.14, -36), B = 'font-weight="700"';
  d.rect(612, 164, 1316, 994, '#212121').rect(863, 164, 1316, 994, '#424242').rect(863, 164, 1316, 280, '#323232').rect(862, 164, 864.5, 994, '#4a4a4a');
  d.text(626, 242, 'Tickets', 17, '#d5d5d5', 750, 'font-weight="300"').raw(expand(d.x(821), d.y(214)));
  d.rect(612, 279, 863, 282, '#424242').rect(863, 279, 1316, 282, '#555').rect(778, 282, 780, 325, '#333').raw(`<circle cx="${d.x(633)}" cy="${d.y(300)}" r="1.600" fill="none" stroke="#bbb" stroke-width=".7"/><path d="M${d.x(636)} ${d.y(304)}l1.500 1.500" stroke="#bbb" stroke-width=".7"/>`).text(648, 307, 'Search...', 4.8, '#9e9e9e', 692).text(794, 307, 'Filters', 4.8, '#9e9e9e', 827);
  d.path('M835,299 L841,305 L847,299', 'fill="none" stroke="#bbb" stroke-width="1.200"');
  d.rect(612, 390, 863, 452, '#424242').rect(612, 451, 863, 454, '#616161');
  [['Security Optimizations for Febru...', 'Blango to The Mango (123456)', 831], ['Service Disruption', 'Blango to The Mango (123456)', 737], ['Service Terminated Unexpectedl...', 'Staging Account (123456)', 831], ['May Invoice Available', "Jim's Personal acct (23623)", 757], ['Ticket Update: Heeeeelp!!!', 'WoW Prod Acct (123456)', 784], ['Ticket Update: When is my new f...', 'WoW Dev Environment (57567)', 832], ['Maintenance Notification for Y...', 'WoW Dev Environment (57567)', 818], ['Ticket Update: Heeeeelp!!!', 'WoW Prod Acct (123456)', 784], ['Ticket Update: When is my new f...', 'WoW Dev Environment (57567)', 832], ['Maintenance Notification for Y...', 'WoW Dev Environment (57567)', 818]].forEach((r, i) => {
    const y = 356 + i * 63;
    d.text(629, y, r[0], 5.2, '#e0e0e0', r[2], 'font-weight="500"').text(629, y + 15, 'Account: ' + r[1], 3.7, '#757575').rect(612, y + 33, 863, y + 35, '#333');
  });
  d.text(879, 245, 'Service Terminated Unexp...', 8.4, '#fff', 1125).rect(1194, 214, 1255, 245, 'none', 'stroke="#167787" stroke-width=".8"').mid(1224, 233, 'Reply', 4.7, CYAN, B).rect(1273, 214, 1297, 245, 'none', 'stroke="#167787" stroke-width=".8"').path('M1281,223 L1288,232 M1288,223 L1281,232', `stroke="${CYAN}" stroke-width=".9"`);
  [[317, '123456 - 123456-FA4DAC01.name.abcy.com', 1114], [362, 'We received the following informational event for 123456 -', 1229], [386, '123456-FA4DAC01.name.abc.com', 1085], [443, 'Event Time: 7/13/2016 9:23:52 PM', 1062], [492, 'The Jenkins Slave service terminated unexpectedly. It has done this', 1232], [516, '1 time(s). The following corrective action will be taken in 0', 1183], [539, 'milliseconds: Restart the service.', 1052], [584, 'If you have any questions about this alert, please feel free to contact', 1235], [608, 'us or update this ticket at any time.', 1062]].forEach(r => d.text(880, r[0], r[1], 4.8, '#fff', r[2], 'font-weight="600"'));
  d.text(1211, 317, 'Jul 13 10:31 am', 4.8, '#fff', 1295, B);
  d.rect(863, 879, 1316, 882, '#5c5c5c').text(880, 914, 'NOTIFICATION ID: 59c368fc-8635-4f8f-b30e-78ffb46714f2', 4.4, '#aaa', 1186).text(880, 938, 'DEVICE ID: 123456', 4.4, '#aaa', 980).text(880, 962, 'DEVICE NAME: 123456-FA4DAC01.mgc-lnr.abc.com', 4.4, '#aaa', 1151);
  put('shot6', accounts(0) + productNav() + topbar(AWS) + d.out);
}

put('shot7', accounts(0) + filters() + productNav() + topbar());

const fav = (d, x, y, w) => d.rect(x + 4, y - 4.5, x + 11, y + 2.5, '#f39c12', 'rx="1.500"').rect(x + 7.2, y - 4.5, x + 7.8, y + 2.5, '#424242').text(x + 15, y, 'Staging Account', 4.8, '#fff', x + 51, 'font-weight="700"').text(x + 15, y + 6.3, '76854865743 (Navigator)', 3.8, '#8a8a8a', x + 62).rect(x, y + 13.5, w, y + 14.2, '#5a5a5a');
const pointer = (x1, x2, y) => `<path d="M${x1} ${y}H${x2 - 4}" stroke="#d6306a" stroke-width="1.300"/><path d="M${x2 - 5} ${y - 2.6}L${x2} ${y}L${x2 - 5} ${y + 2.6}z" fill="#fff" stroke="${PINK}" stroke-width=".5"/>`;
const make = (d, x, y) => d.rect(x, y, x + 56, y + 7, 'none', 'stroke="#167787" stroke-width=".7"').mid(x + 28, y + 4.8, 'Create Support Ticket', 3.6, CYAN);
{
  const d = new Draft();
  d.rect(0, 18.6, 183.5, 295.5, '#323232').rect(183.5, 18.6, 184.4, 295.5, '#bbb').text(7, 28, 'Rackspace', 3.6, '#bbb').text(7, 45.5, 'Global Dashboard', 16.5, '#fff', 133.5, 'font-weight="300"').raw(expand(166.5, 36.5));
  tile(d, 7, 56, 88.5, 209, 'Support Tickets', 'View All', 16, 11, 39);
  tile(d, 95, 56, 177.5, 169, 'Favorite Accounts', 'View All', 16, 11, 44);
  tile(d, 95, 176, 177.5, 289.5, 'Favorite Actions', 'View List', 16, 10, 39);
  tile(d, 7, 216, 88.5, 289.5, 'Messages', 'View All', 16, 10, 25);
  fav(d, 95, 79.5, 177.5); d.rect(7, 193.5, 88.5, 194.2, '#555'); make(d, 11, 198).raw(pointer(41, 133, 160.5));
  put('shot8', accounts(1) + filters() + topbar(HOME) + d.out);
}
{
  const d = new Draft();
  d.rect(0, 0, 440, 295.5, '#323232').raw(globalNav(46, 11, false)).text(73, 46, 'Global Dashboard', 16.5, '#fff', 199, 'font-weight="300"').raw(expand(418, 36.5));
  tile(d, 72.5, 57.5, 215.5, 210, 'Support Tickets', 'View All', 15, 10, 39);
  tile(d, 72.5, 218, 215.5, 290, 'Messages', 'View All', 15, 10, 25);
  tile(d, 225, 57.5, 337.5, 130, 'Billing Summary', 'Go to Billing', 15, 10, 39);
  tile(d, 225, 137, 337.5, 210, 'Usage Summary', 'View Usage', 15, 10, 40);
  tile(d, 225, 217, 337.5, 290, 'Documentation', 'View Docs', 15, 10, 38);
  tile(d, 347, 57.5, 429, 170, 'Favorite Accounts', 'View All', 15, 10, 44);
  tile(d, 347, 177.5, 429, 290, 'Favorite Actions', 'View List', 15, 10, 40);
  fav(d, 347, 81.5, 429); d.rect(72.5, 194.5, 215.5, 195.2, '#555'); make(d, 77, 199).raw(pointer(174, 266, 161.5));
  put('shot9', d.out + topbar(HOME));
}
</script>
</body>
</html>
